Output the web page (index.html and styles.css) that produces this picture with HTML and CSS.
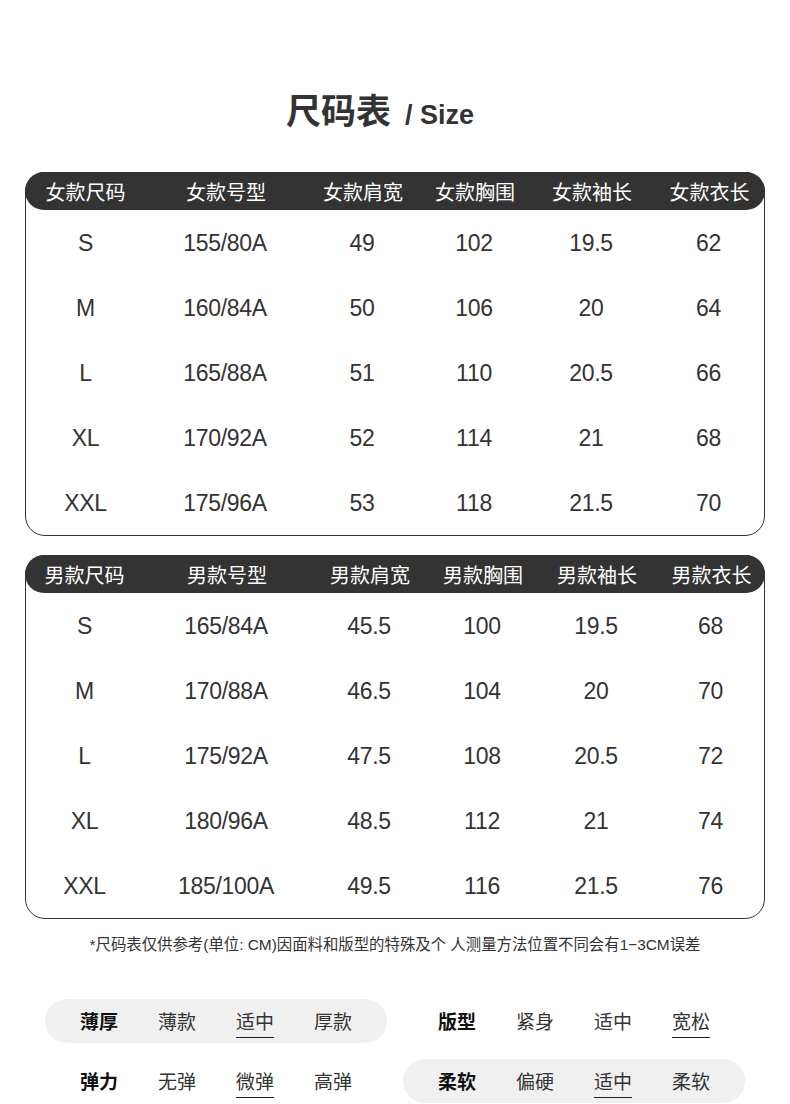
FILE: index.html
```html
<!DOCTYPE html>
<html lang="zh">
<head>
<meta charset="utf-8">
<title>尺码表 / Size</title>
<link rel="stylesheet" href="styles.css">
</head>
<body>
<div class="page">
  <h1 class="title"><span class="title-cn">尺码表</span><span class="title-en">/ Size</span></h1>

  <div class="size-table t-women">
    <div class="row head"><span>女款尺码</span><span>女款号型</span><span>女款肩宽</span><span>女款胸围</span><span>女款袖长</span><span>女款衣长</span></div>
    <div class="row"><span>S</span><span>155/80A</span><span>49</span><span>102</span><span>19.5</span><span>62</span></div>
    <div class="row"><span>M</span><span>160/84A</span><span>50</span><span>106</span><span>20</span><span>64</span></div>
    <div class="row"><span>L</span><span>165/88A</span><span>51</span><span>110</span><span>20.5</span><span>66</span></div>
    <div class="row"><span>XL</span><span>170/92A</span><span>52</span><span>114</span><span>21</span><span>68</span></div>
    <div class="row"><span>XXL</span><span>175/96A</span><span>53</span><span>118</span><span>21.5</span><span>70</span></div>
  </div>

  <div class="size-table t-men">
    <div class="row head"><span>男款尺码</span><span>男款号型</span><span>男款肩宽</span><span>男款胸围</span><span>男款袖长</span><span>男款衣长</span></div>
    <div class="row"><span>S</span><span>165/84A</span><span>45.5</span><span>100</span><span>19.5</span><span>68</span></div>
    <div class="row"><span>M</span><span>170/88A</span><span>46.5</span><span>104</span><span>20</span><span>70</span></div>
    <div class="row"><span>L</span><span>175/92A</span><span>47.5</span><span>108</span><span>20.5</span><span>72</span></div>
    <div class="row"><span>XL</span><span>180/96A</span><span>48.5</span><span>112</span><span>21</span><span>74</span></div>
    <div class="row"><span>XXL</span><span>185/100A</span><span>49.5</span><span>116</span><span>21.5</span><span>76</span></div>
  </div>

  <p class="note">*尺码表仅供参考(单位: CM)因面料和版型的特殊及个 人测量方法位置不同会有1−3CM误差</p>

  <div class="attrs">
    <div class="attr pill"><span class="lbl">薄厚</span><span>薄款</span><span><i class="sel">适中</i></span><span>厚款</span></div>
    <div class="attr"><span class="lbl">版型</span><span>紧身</span><span>适中</span><span><i class="sel">宽松</i></span></div>
    <div class="attr"><span class="lbl">弹力</span><span>无弹</span><span><i class="sel">微弹</i></span><span>高弹</span></div>
    <div class="attr pill"><span class="lbl">柔软</span><span>偏硬</span><span><i class="sel">适中</i></span><span>柔软</span></div>
  </div>
</div>
</body>
</html>
```

FILE: styles.css
```css
* { box-sizing: border-box; }
html, body { margin: 0; padding: 0; background: #fff; }
body {
  font-family: "Liberation Sans", "Noto Sans CJK SC", sans-serif;
  color: #333;
}
.page {
  width: 790px;
  padding: 89px 25px 0;
}
.title {
  margin: 0 0 43px;
  height: 40px;
  display: flex;
  justify-content: center;
  align-items: baseline;
  line-height: 40px;
  padding-right: 30px;
  color: #333;
}
.title-cn {
  font-family: "Noto Sans CJK SC", sans-serif;
  font-size: 35px;
  font-weight: 700;
}
.title-en {
  font-family: "Liberation Sans", sans-serif;
  font-size: 27px;
  font-weight: 700;
  margin-left: 14px;
}
.size-table {
  border: 1px solid #333;
  border-radius: 20px;
  width: 740px;
}
.t-men { margin-top: 19px; }
.row {
  display: grid;
  height: 65px;
  padding-top: 2px;
  align-items: center;
  font-size: 23px;
  letter-spacing: -0.3px;
  color: #333;
}
.t-women .row { grid-template-columns: 119px 160px 114px 110px 124px 111px; }
.t-men .row { grid-template-columns: 117px 166px 120px 106px 122px 107px; }
.row span { text-align: center; white-space: nowrap; }
.row.head {
  height: 38px;
  padding-top: 0;
  margin: -1px -1px 0 -1px;
  background: #333;
  color: #fff;
  border-radius: 20px;
  font-family: "Noto Sans CJK SC", sans-serif;
  font-size: 20px;
  letter-spacing: 0;
}
.t-women .row.head { grid-template-columns: 121px 160px 114px 110px 124px 111px; }
.t-men .row.head { grid-template-columns: 119px 166px 120px 106px 122px 107px; }
.note {
  margin: 16px 0 0;
  line-height: 20px;
  font-size: 15.4px;
  text-align: center;
  color: #333;
}
.attrs {
  margin: 44px 0 0 20px;
  display: grid;
  grid-template-columns: 342px 342px;
  column-gap: 16px;
  row-gap: 16px;
}
.attr {
  height: 44px;
  border-radius: 22px;
  padding: 0 15px;
  display: grid;
  grid-template-columns: repeat(4, 78px);
  align-items: center;
  font-family: "Noto Sans CJK SC", sans-serif;
  font-size: 19px;
  color: #333;
}
.attr.pill { background: #f0f0f0; }
.attr span { text-align: center; line-height: 24px; }
.attr .lbl { font-weight: 700; color: #111; }
.sel {
  font-style: normal;
  display: inline-block;
  position: relative;
}
.sel::after {
  content: "";
  position: absolute;
  left: 0;
  right: 0;
  bottom: -5px;
  height: 1px;
  background: #222;
}
```
